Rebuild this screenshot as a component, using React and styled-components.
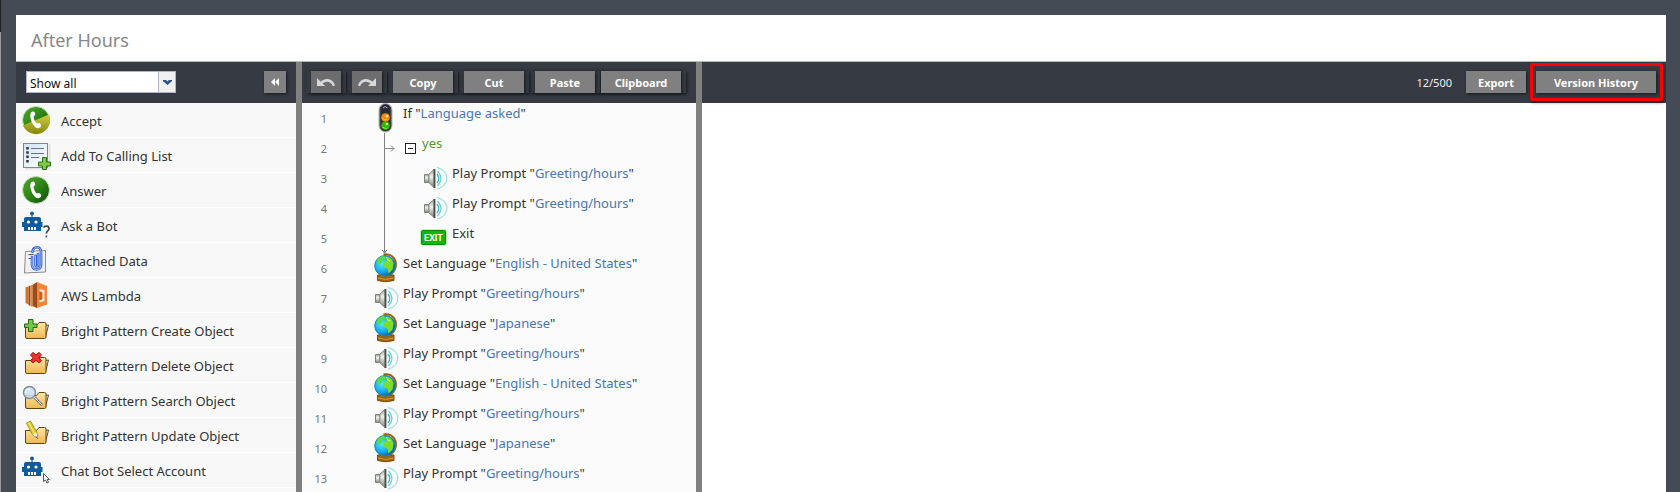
import React from "react";
import styled, { createGlobalStyle } from "styled-components";

const GlobalStyle = createGlobalStyle`
  * {
    box-sizing: border-box;
  }

  body {
    margin: 0;
    background-color: #444b54;
    font-family: "Noto Sans", sans-serif;
    font-size: 13px;
    color: #333;
  }

  html,
  body,
  #root {
    height: 100%;
  }
`;

const PhoneIcon = ({ id, split }) => (
  <svg width="30" height="30" viewBox="0 0 30 30">
    <defs>
      <linearGradient id={id} x1="0" y1="0" x2="1" y2="1">
        <stop offset="0" stopColor="#4fa52e" />
        <stop offset="0.45" stopColor="#2f8a17" />
        <stop offset="1" stopColor="#0d4a08" />
      </linearGradient>
      <linearGradient id={id + "y"} x1="0" y1="0" x2="0" y2="1">
        <stop offset="0" stopColor="#d2cf45" />
        <stop offset="1" stopColor="#84860c" />
      </linearGradient>
    </defs>
    <circle cx="15" cy="15" r="13.5" fill={`url(#${id})`} stroke="#c9dfc0" />
    {split && (
      <path d="M2 20.5 L28 9.5 A13.5 13.5 0 0 1 2 20.5Z" fill={`url(#${id}y)`} />
    )}
    <path
      d="M10.2 7.2c1.4-1.2 3.4-.6 3.9 1 .4 1.5-.4 2.8-1.6 3.4.2 2.7 1.3 5 3.2 7 1.3-.9 3-.6 4 .7.9 1.3.5 2.5-.7 3.3-2.3 1.4-5 .2-6.900-3.100-2.500-4.200-3.800-9.900-1.900-12.300z"
      fill="#fff"
    />
  </svg>
);

const CallListIcon = () => (
  <svg width="30" height="30" viewBox="0 0 30 30">
    <defs>
      <linearGradient id="sheet" x1="0" y1="0" x2="1" y2="1">
        <stop offset="0" stopColor="#cfe4f8" />
        <stop offset="1" stopColor="#fff" />
      </linearGradient>
    </defs>
    <path d="M4 28.5h24.500V4" fill="none" stroke="#e2e2e2" strokeWidth="2" />
    <rect x="2.5" y="3.5" width="24" height="24" fill="url(#sheet)" stroke="#858585" />
    <path d="M6.5 7v16" stroke="#333" strokeWidth="2.5" strokeDasharray="2.5 1.8" />
    <path d="M10 8.5h13M10 13.5h13M10 17.5h8" stroke="#6b7380" />
    <path
      d="M21.5 17.5h4v4.500h4v4h-4v3.500h-4V26h-4v-4h4z"
      fill="#7fca3e"
      stroke="#2f6b21"
    />
  </svg>
);

const BotIcon = ({ pointer }) => (
  <svg width="30" height="30" viewBox="0 0 30 30">
    <circle cx="11" cy="3.5" r="1.9" fill="#125a9c" />
    <path
      d="M10.500 4h1v3h6.500q2 0 2 2v3h1.500v5H20v4H3v-4H1v-5h2V9q0-2 2-2h5.500z"
      fill="#125a9c"
    />
    <circle cx="7.5" cy="12" r="1.6" fill="#fff" />
    <circle cx="15" cy="12" r="1.6" fill="#fff" />
    <path d="M7 17h2v3H7zM10 17h2v3h-2zM13 17h2v3h-2z" fill="#fff" />
    {pointer ? (
      <path
        d="M22.500 18.500v8l2-1.500 1.500 3 1.500-.7-1.400-2.800h2.400z"
        fill="#fff"
        stroke="#555"
      />
    ) : (
      <g fill="none" stroke="#444" strokeWidth="1.7">
        <path d="M22.500 17.500c1-2 5.500-2 5.500 1 0 2.200-2.700 2.500-2.700 5" />
        <path d="M24.500 26.500h1.700" />
      </g>
    )}
  </svg>
);

const ClipIcon = () => (
  <svg width="30" height="30" viewBox="0 0 30 30">
    <path d="M4.500 6.500l20-1v21.500l-21 1z" fill="#f1f1f3" stroke="#8b8b8b" />
    <path d="M7 10l14-1v15" fill="none" stroke="#ccc" />
    <path d="M7.500 9.500h5M7.500 13.500h4" stroke="#555" />
    <g fill="none" strokeLinecap="round">
      <path
        d="M11 12v8c0 6 9 6 9 0V7c0-6.500-8-6-8.500 0M14.500 11v9c0 2 2.500 2 2.500 0V9"
        stroke="#2d5dcc"
        strokeWidth="2.6"
      />
      <path
        d="M11 12v8c0 6 9 6 9 0V7c0-6.500-8-6-8.500 0M14.500 11v9c0 2 2.500 2 2.500 0V9"
        stroke="#a9c2fb"
      />
    </g>
  </svg>
);

const LambdaIcon = () => (
  <svg width="30" height="30" viewBox="0 0 30 30">
    <path d="M4.500 7.500l3-1v18l-3-1.500z" fill="#d87324" />
    <path d="M7.500 6.500l2-1v20.500l-2-1z" fill="#9d4c19" />
    <path d="M9.500 5.500l2-1V27l-2-1z" fill="#f08536" />
    <path d="M11.500 5L16 2v26l-4.500-2z" fill="#9d4c19" />
    <path d="M16 2l10 4v18.500L16 28z" fill="#f58536" />
    <path d="M18.500 9l5 1v11l-5 1.500v-2.500l3-.7v-7l-3-.8z" fill="#fde7d5" />
    <path d="M18.500 11.500l2.500.8v3l-1 .7 1 .7v2.800l-2.500.5z" fill="#c05e20" />
  </svg>
);

const FolderIcon = ({ id, action }) => (
  <svg width="30" height="30" viewBox="0 0 30 30">
    <defs>
      <linearGradient id={id} x1="0" y1="0" x2="0" y2="1">
        <stop offset="0" stopColor="#ffe5a3" />
        <stop offset="1" stopColor="#eeb84f" />
      </linearGradient>
    </defs>
    <path d="M24 10.500l3.500-.5-3 12h-1.500z" fill="#fff4cf" stroke="#5f481d" />
    <path
      d="M4.500 10.500h11l2.500-3h5.500q1.500 0 1.500 1.500v13q0 1.500-1.500 1.500H6q-1.500 0-1.500-1.500z"
      fill={`url(#${id})`}
      stroke="#604112"
    />
    {action === "create" && (
      <path
        d="M7.500 4.500h4.500V9h4v3.500h-4v4H7.500v-4h-4V9h4z"
        fill="#78c83f"
        stroke="#236523"
      />
    )}
    {action === "delete" && (
      <path
        d="M12 2.500l3 2.300 3-2.300 2.500 2.300-2.500 3 2.500 3-2.500 2-3-2.300-3 2.300-2.500-2 2.500-3-2.500-3z"
        fill="#ed302b"
        stroke="#9d1712"
      />
    )}
    {action === "search" && (
      <g>
        <path d="M13 12l8 8" stroke="#898989" strokeWidth="3" />
        <path d="M13 12l8 8" stroke="#eee" />
        <circle
          cx="8.500"
          cy="7.500"
          r="6"
          fill="#cbe1f3"
          fillOpacity="0.85"
          stroke="#858c93"
          strokeWidth="1.500"
        />
        <path d="M4.500 8c0-3 2-4.500 5-4" stroke="#fff" fill="none" />
      </g>
    )}
    {action === "update" && (
      <g>
        <path d="M5.500 3l4-1.800 6.500 11.300.5 5.500-4.800-3z" fill="#dfcc32" stroke="#a79520" />
        <path d="M7.500 2.500l6 11" stroke="#fff47a" />
        <path d="M11.500 14.500l4-2 1 5.500z" fill="#eee" />
        <path d="M15 16.500l1.500 2" stroke="#444" />
      </g>
    )}
  </svg>
);

const LightIcon = () => (
  <svg width="30" height="30" viewBox="0 0 30 30">
    <rect x="9" y="0.500" width="13" height="28.500" rx="6.500" fill="#51504e" stroke="#b5b5b5" />
    <rect x="10.500" y="1.500" width="10" height="26.500" rx="5" fill="#302f2f" />
    <circle cx="15.500" cy="6" r="4" fill="#29263b" />
    <circle cx="15.500" cy="14.500" r="4.300" fill="#f58b0b" />
    <circle cx="15.500" cy="22.500" r="4.300" fill="#35b500" />
    <path d="M13 5q2-3 4.500 0" fill="none" stroke="#b6b3ce" />
    <circle cx="17" cy="13" r="1.300" fill="#fff0b3" />
    <circle cx="17" cy="21" r="1.300" fill="#d6ff99" />
    <path d="M12.500 15.500q3 2.500 5 1" fill="none" stroke="#ffc04d" />
    <path d="M12.500 24q3 2.500 5 1" fill="none" stroke="#8dee48" />
  </svg>
);

const SpeakerIcon = () => (
  <svg width="30" height="30" viewBox="0 0 30 30">
    <defs>
      <linearGradient id="cone" x1="0" y1="0" x2="0" y2="1">
        <stop offset="0" stopColor="#9ca097" />
        <stop offset="0.4" stopColor="#f0f2ec" />
        <stop offset="1" stopColor="#7e8379" />
      </linearGradient>
    </defs>
    <path d="M5.500 11.500h4.500v8H5.500z" fill="url(#cone)" stroke="#7d8279" />
    <path d="M10 11l5-4.500v18L10 20z" fill="url(#cone)" stroke="#8b9087" />
    <path d="M15.500 6v19" stroke="#4b4f48" strokeWidth="1.800" />
    <g fill="none" strokeWidth="1.400">
      <path d="M18 11q3.500 4.500 0 9" stroke="#35bfc9" />
      <path d="M18.500 8q7 7.500 0 15" stroke="#65d1d5" />
      <path d="M18 4.500c13 3 13 18.500 0 21.500" stroke="#a2e3e4" />
    </g>
  </svg>
);

const GlobeIcon = () => (
  <svg width="30" height="30" viewBox="0 0 30 30">
    <defs>
      <radialGradient id="sea" cx="0.35" cy="0.4" r="0.65">
        <stop offset="0" stopColor="#55e7ff" />
        <stop offset="0.6" stopColor="#16a9ec" />
        <stop offset="1" stopColor="#0862a4" />
      </radialGradient>
    </defs>
    <path d="M13.500 1.500C23 0 28 8 25 16q-2 5-7 7" fill="none" stroke="#98600e" strokeWidth="2" />
    <path d="M7.500 22h16.500v5.500q-8 2.500-16.500 0z" fill="#a0660f" stroke="#7c4e0c" />
    <path d="M8 25q7.500 3 15.500 0" fill="none" stroke="#d29a38" />
    <circle cx="15" cy="12.800" r="10.300" fill="url(#sea)" stroke="#2387a2" />
    <path d="M7.500 6q3-3.500 7-3l1 3-3 1-1 3-3 2-2-3z" fill="#55dd43" />
    <path d="M17.500 3.500q5 2 6 7l-1 6-4 4-1-5-3-1-1-4 3-3z" fill="#7cdd25" />
    <path d="M16.500 4l1 3 3 1" fill="none" stroke="#dcff6a" />
  </svg>
);

const ExitIcon = () => (
  <svg width="30" height="30" viewBox="0 0 30 30">
    <rect x="1" y="6" width="27" height="17" rx="3" fill="#c5f4bd" />
    <rect x="2.500" y="7.500" width="24" height="14" rx="1" fill="#0cb80c" stroke="#078a07" />
    <text
      x="14.500"
      y="18"
      fill="#fff"
      fontSize="9"
      fontWeight="700"
      textAnchor="middle"
      fontFamily="Roboto"
    >
      EXIT
    </text>
  </svg>
);

const MinusBox = () => (
  <svg width="11" height="11" viewBox="0 0 11 11">
    <rect x="0.500" y="0.500" width="10" height="10" fill="#fff" stroke="#222" />
    <path d="M3 5.500h5" stroke="#222" />
  </svg>
);

const BranchLine = () => (
  <svg width="14" height="124" viewBox="0 0 14 124">
    <path d="M3.500 0v119" stroke="#808080" />
    <path d="M4 15.500h9M10 12.500l3 3-3 3" fill="none" stroke="#888" />
    <path d="M1 117l2.500 3 2.500-3" fill="none" stroke="#666" />
  </svg>
);

const UndoIcon = ({ flip }) => (
  <svg width="20" height="12" viewBox="0 0 20 12">
    <g transform={flip ? "translate(20 0) scale(-1 1)" : undefined} fill="#d8d8d8">
      <path d="M1 2v8h8z" />
      <path d="M4 6.500C8 1.500 16.500 1.500 19 9.500l-2 .7C14.500 4.500 9 4.500 5.500 8.500z" />
    </g>
  </svg>
);

const blocks = [
  { name: "Accept", icon: <PhoneIcon id="accept" split /> },
  { name: "Add To Calling List", icon: <CallListIcon /> },
  { name: "Answer", icon: <PhoneIcon id="answer" /> },
  { name: "Ask a Bot", icon: <BotIcon /> },
  { name: "Attached Data", icon: <ClipIcon /> },
  { name: "AWS Lambda", icon: <LambdaIcon /> },
  { name: "Bright Pattern Create Object", icon: <FolderIcon id="f1" action="create" /> },
  { name: "Bright Pattern Delete Object", icon: <FolderIcon id="f2" action="delete" /> },
  { name: "Bright Pattern Search Object", icon: <FolderIcon id="f3" action="search" /> },
  { name: "Bright Pattern Update Object", icon: <FolderIcon id="f4" action="update" /> },
  { name: "Chat Bot Select Account", icon: <BotIcon pointer /> },
];

const prompt = { icon: <SpeakerIcon />, text: "Play Prompt", value: "Greeting/hours" };
const english = { icon: <GlobeIcon />, text: "Set Language", value: "English - United States" };
const japanese = { icon: <GlobeIcon />, text: "Set Language", value: "Japanese" };

const steps = [
  { icon: <LightIcon />, text: "If", value: "Language asked" },
  { branch: "yes" },
  { ...prompt, nested: true },
  { ...prompt, nested: true },
  { icon: <ExitIcon />, text: "Exit", nested: true },
  english,
  prompt,
  japanese,
  prompt,
  english,
  prompt,
  japanese,
  prompt,
];

const App = () => {
  return (
    <>
      <GlobalStyle />
      <Page>
        <Window>
          <Title>After Hours</Title>
          <Columns>
            <Sidebar>
              <Toolbar $spread>
                <SelectBox>
                  <Select aria-label="Filter blocks">
                    <option>Show all</option>
                  </Select>
                  <SelectArrow>
                    <svg width="9" height="5" viewBox="0 0 9 5">
                      <path d="M0 0h3l1.500 1.500L6 0h3v1L4.500 5 0 1z" fill="#2b4d8c" />
                    </svg>
                  </SelectArrow>
                </SelectBox>
                <Button $width={22} aria-label="Collapse">
                  <svg width="10" height="8" viewBox="0 0 10 8">
                    <path d="M5 0v8L1 4zM9 0v8L5 4z" fill="#fff" />
                  </svg>
                </Button>
              </Toolbar>
              <BlockList>
                {blocks.map((block) => (
                  <Block key={block.name}>
                    {block.icon}
                    <BlockName>{block.name}</BlockName>
                  </Block>
                ))}
              </BlockList>
            </Sidebar>
            <Splitter />
            <Scenario>
              <Toolbar>
                <ButtonSlot>
                  <Button $width={30} $dim aria-label="Undo">
                    <UndoIcon />
                  </Button>
                </ButtonSlot>
                <ButtonSlot>
                  <Button $width={30} $dim aria-label="Redo">
                    <UndoIcon flip />
                  </Button>
                </ButtonSlot>
                <ButtonSlot>
                  <Button $width={60}>Copy</Button>
                </ButtonSlot>
                <ButtonSlot>
                  <Button $width={60}>Cut</Button>
                </ButtonSlot>
                <ButtonSlot>
                  <Button $width={60}>Paste</Button>
                </ButtonSlot>
                <ButtonSlot $tight>
                  <Button $width={80}>Clipboard</Button>
                </ButtonSlot>
              </Toolbar>
              <StepList>
                {steps.map((step, i) => (
                  <Step key={i}>
                    <StepNumber>{i + 1}</StepNumber>
                    {step.branch ? (
                      <>
                        <Toggle aria-label="Collapse branch">
                          <MinusBox />
                        </Toggle>
                        <StepText $branch>{step.branch}</StepText>
                      </>
                    ) : (
                      <>
                        <StepIcon $nested={step.nested}>{step.icon}</StepIcon>
                        <StepText>
                          {step.text}
                          {step.value && (
                            <>
                              {' "'}
                              <Value href="#">{step.value}</Value>
                              {'"'}
                            </>
                          )}
                        </StepText>
                      </>
                    )}
                    {i === 0 && (
                      <Branch>
                        <BranchLine />
                      </Branch>
                    )}
                  </Step>
                ))}
              </StepList>
            </Scenario>
            <Splitter />
            <Details>
              <Toolbar $end>
                <Counter>12/500</Counter>
                <Button $width={60}>Export</Button>
                <Highlight>
                  <Button $width={120}>Version History</Button>
                </Highlight>
              </Toolbar>
            </Details>
          </Columns>
        </Window>
      </Page>
    </>
  );
};

const Page = styled.div`
  height: 100vh;
  padding: 15px 14px 0 16px;
  background: linear-gradient(#1d1f22 32px, #999 32px) left / 1px 100% no-repeat;
  overflow: hidden;
`;

const Window = styled.div`
  height: 100%;
  display: flex;
  flex-direction: column;
  background-color: white;
`;

const Title = styled.h1`
  margin: 0;
  padding: 0 15px;
  font-size: 18px;
  font-weight: 400;
  line-height: 50px;
  height: 47px;
  flex: none;
  color: #888;
  border-bottom: 1px solid #b4bab6;
`;

const Columns = styled.div`
  flex: 1;
  min-height: 0;
  display: flex;
`;

const Sidebar = styled.div`
  width: 280px;
  flex: none;
  overflow: hidden;
  background-color: #f8f8f8;
`;

const Splitter = styled.div`
  width: 6px;
  flex: none;
  background-color: #808080;
`;

const Scenario = styled.div`
  width: 394px;
  flex: none;
  overflow: hidden;
  background-color: #fbfbfb;
`;

const Details = styled.div`
  flex: 1;
  min-width: 0;
`;

const Toolbar = styled.div`
  height: 41px;
  display: flex;
  align-items: center;
  padding: ${(props) => (props.$spread ? "0 10px 1px" : props.$end ? "0 3px 1px" : "0 4px 1px")};
  justify-content: ${(props) =>
    props.$spread ? "space-between" : props.$end ? "flex-end" : "flex-start"};
  background-color: #353a43;
`;

const SelectBox = styled.div`
  position: relative;
  width: 150px;
  height: 22px;
`;

const Select = styled.select`
  appearance: none;
  width: 100%;
  height: 100%;
  padding: 2px 24px 0 3px;
  border: 1px solid #b0b4cc;
  border-radius: 0;
  background-color: white;
  color: #111;
  font-family: inherit;
  font-size: 12px;
`;

const SelectArrow = styled.span`
  position: absolute;
  top: 1px;
  right: 1px;
  bottom: 1px;
  width: 17px;
  display: flex;
  align-items: center;
  justify-content: center;
  border-left: 1px solid #b0b4cc;
  background-color: #f0f0f0;
  pointer-events: none;
`;

const ButtonSlot = styled.div`
  padding: 0 5px;
  margin-right: ${(props) => (props.$tight ? "0" : "1px")};
  margin-left: ${(props) => (props.$tight ? "-5px" : "0")};
  box-shadow: 1px 1px 3px #15181d;
`;

const Button = styled.button`
  width: ${(props) => props.$width}px;
  height: 22px;
  padding: 0;
  display: flex;
  align-items: center;
  justify-content: center;
  border: none;
  background-color: ${(props) => (props.$dim ? "#6d6d6f" : "#808080")};
  box-shadow: 1px 1px 3px #15181d;
  color: white;
  font-family: inherit;
  font-size: 11px;
  font-weight: 700;
  cursor: pointer;
`;

const Counter = styled.span`
  margin-right: 14px;
  font-size: 11px;
  color: #eee;
`;

const Highlight = styled.div`
  margin-left: 4px;
  padding: 5px 4px 5px 3px;
  border: 3px solid #f00;
  border-radius: 2px;
  box-shadow: 1px 2px 3px rgba(0, 0, 0, 0.4);
`;

const BlockList = styled.ul`
  margin: 0;
  padding: 0;
  list-style: none;
`;

const Block = styled.li`
  height: 35px;
  padding: 0 5px;
  display: flex;
  align-items: center;
  gap: 10px;
  border-bottom: 1px solid white;
`;

const BlockName = styled.span`
  padding-top: 2px;
`;

const StepList = styled.ol`
  margin: 0;
  padding: 0;
  list-style: none;
`;

const Step = styled.li`
  position: relative;
  height: 30px;
  display: flex;
`;

const StepNumber = styled.span`
  width: 25px;
  text-align: right;
  font-size: 11px;
  line-height: 32px;
  color: #777;
`;

const StepIcon = styled.span`
  width: 30px;
  height: 30px;
  margin-left: ${(props) => (props.$nested ? "92px" : "43px")};
  margin-right: 3px;
`;

const StepText = styled.span`
  line-height: 21px;
  color: ${(props) => (props.$branch ? "#56962b" : "#333")};
`;

const Value = styled.a`
  color: #4a76b3;
  text-decoration: none;
`;

const Toggle = styled.button`
  width: 11px;
  height: 11px;
  margin: 10px 6px 0 78px;
  padding: 0;
  display: flex;
  border: none;
  background: none;
`;

/* runs over the rows of the "yes" branch */
const Branch = styled.span`
  position: absolute;
  top: 30px;
  left: 79px;
  height: 124px;
  z-index: 1;
  pointer-events: none;
`;

export default App;
